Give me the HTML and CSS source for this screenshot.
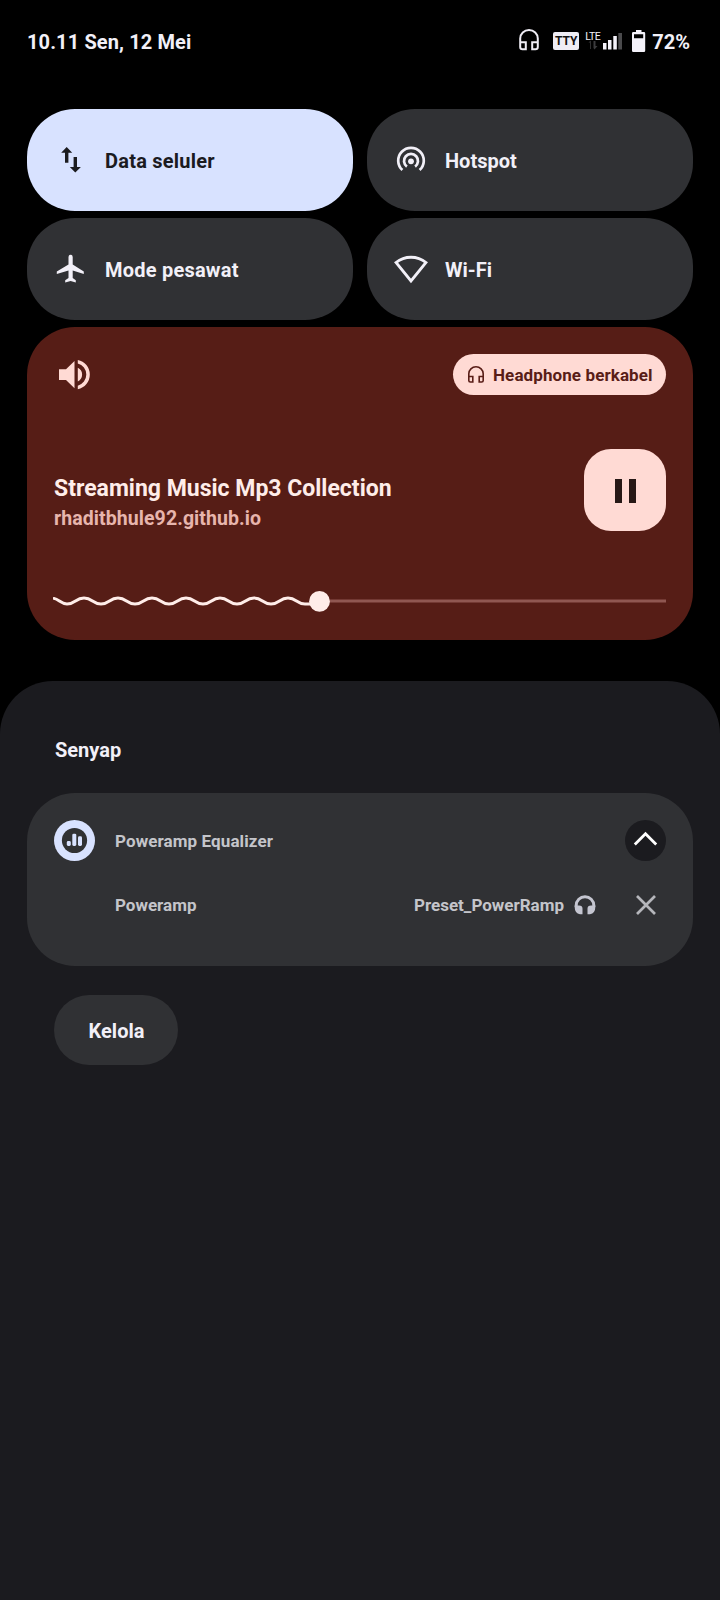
FILE: index.html
```
<!DOCTYPE html>
<html lang="id">
<head>
<meta charset="utf-8">
<title>Panel notifikasi</title>
<link rel="stylesheet" href="styles.css">
</head>
<body>
<div class="screen">
  <header class="status">
    <span class="clock">10.11 Sen, 12 Mei</span>
    <div class="indicators">
      <svg class="i-head" width="20" height="22" viewBox="0 0 20 22" fill="none" stroke="#efedf5" stroke-width="2"><path d="M1.2 18V9.5a8.8 8.5 0 0 1 17.6 0V18q0 2.3-2.3 2.3h-3.3v-7h5.600M1.2 13.300h5.600v7H3.500Q1.200 20.300 1.200 18"/></svg>
      <span class="tty">TTY</span>
      <svg class="i-signal" width="38" height="23" viewBox="0 -3 38 23"><text class="lte" x="0.200" y="9" textLength="15.500">LTE</text><path fill="#3b3b3d" d="M5 18V11.500H3.500L5.800 9.500V18zM8.500 10h2v5h2l-3 3.500-1-1.500z"/><path fill="#f4f2fa" d="M18 12h3.500v6.500H18zM23 9h3.500v9.500H23zM28.300 5h3.500v13.500h-3.500z"/><path fill="#4a4a4c" d="M33.300 2H37v16.500h-3.700z"/></svg>
      <svg class="i-batt" width="14" height="22" viewBox="0 0 14 22"><path fill="#f4f2fa" fill-rule="evenodd" d="M4 0h5.500v2H12q1.200 0 1.200 1.200v17.600q0 1.200-1.200 1.200H1.200Q0 22 0 20.800V3.200Q0 2 1.200 2H4zM2 4.300v4h9.200v-4z"/></svg>
      <span class="pct">72%</span>
    </div>
  </header>

  <section class="tiles">
    <div class="tile on wide">
      <svg width="34" height="34" viewBox="0 0 34 34"><path fill="#1b1b1f" d="M12.700 4l5.500 5.700h-3.800v10h-3.400v-10H7.200zM19.600 14H23v10h3.900l-5.600 5.500-5.500-5.500h3.800z"/></svg>
      <span>Data seluler</span>
    </div>
    <div class="tile">
      <svg width="34" height="34" viewBox="0 0 34 34" fill="none" stroke="#f2f0f8" stroke-width="2.700"><circle cx="17" cy="18.300" r="2.900" fill="#f2f0f8" stroke="none"/><path d="M12.900 23.600a7 7 0 1 1 8.200 0M8.400 27.100a12.800 12.800 0 1 1 17.200 0"/></svg>
      <span>Hotspot</span>
    </div>
    <div class="tile wide">
      <svg width="34" height="34" viewBox="0 0 34 34"><path fill="#f2f0f8" transform="translate(-.2 .8)" d="M30 21.300v-2.700L18.900 11.600V4.100a2.100 2.100 0 0 0-4.200 0v7.500L3 18.600v2.700l11.700-3.500v7.500l-3.300 2.200v2.300l5.400-1.500 5.200 1.500v-2.300l-3.100-2.200v-7.500z"/></svg>
      <span>Mode pesawat</span>
    </div>
    <div class="tile">
      <svg width="34" height="34" viewBox="0 0 34 34" fill="none" stroke="#f2f0f8" stroke-width="2.800"><path d="M2 10.500a24 24 0 0 1 30 0L17 29z"/></svg>
      <span>Wi-Fi</span>
    </div>
  </section>

  <section class="media">
    <div class="media-top">
      <svg class="i-vol" width="38" height="38" viewBox="0 0 38 38"><path fill="#ffdad4" transform="translate(0 -1.700)" d="M5 15h7l8.500-8.300v27.300l-8.500-8.300H5zM23.800 13.500q4.300 2 4.300 6.800t-4.300 6.800zM23.800 5.600a15 15 0 0 1 0 29.400v-3.600a11.500 11.500 0 0 0 0-22.200z"/></svg>
      <div class="chip">
        <svg width="16" height="17" viewBox="0 0 16 17" fill="none" stroke="#591d17" stroke-width="1.600"><path d="M.8 14.500V7.700a7.200 6.900 0 0 1 14.400 0v6.800q0 1.500-1.500 1.500h-2.500v-5.500h4M.8 10.500h4V16H2.300Q.8 16 .8 14.500"/></svg>
        <span>Headphone berkabel</span>
      </div>
    </div>
    <div class="media-mid">
      <div>
        <div class="title">Streaming Music Mp3 Collection</div>
        <div class="source">rhaditbhule92.github.io</div>
      </div>
      <div class="pause"><i></i><i></i></div>
    </div>
    <svg class="seek" width="614" height="24" viewBox="0 -.4 614 24"><path d="M267 11.500H613" stroke="#8f5751" stroke-width="3"/><path d="M1 9C6 10 8 14.500 14 14.500c8.500 0 8.500-6 17-6s8.500 6 17 6 8.500-6 17-6 8.500 6 17 6 8.500-6 17-6 8.500 6 17 6 8.500-6 17-6 8.500 6 17 6 8.500-6 17-6 8.500 6 17 6 8.500-6 17-6 8.500 6 17 6 8.500-6 17-6 8.500 6 17 6h5" fill="none" stroke="#ffede9" stroke-width="3" stroke-linecap="round"/><circle cx="266.500" cy="12" r="10.400" fill="#ffede9"/></svg>
  </section>

  <main class="shade">
    <h2>Senyap</h2>
    <section class="card">
      <div class="row head">
        <svg class="app" width="41" height="41" viewBox="0 0 41 41"><circle cx="20.500" cy="20.500" r="20.500" fill="#d8e2ff"/><circle cx="20.500" cy="20.500" r="12.600" fill="#303134"/><g fill="#d8e2ff"><rect x="12.800" y="21" width="4" height="5" rx="1.400"/><rect x="18.300" y="13.700" width="4" height="12.300" rx="1.400"/><rect x="24" y="16.200" width="4" height="9.800" rx="1.400"/></g></svg>
        <span class="t-app">Poweramp Equalizer</span>
        <svg class="end" width="41" height="41" viewBox="0 0 41 41"><circle cx="20.500" cy="20.500" r="20.500" fill="#1b1b1f"/><path d="M9.800 24.500L20.500 13.800l10.700 10.700" fill="none" stroke="#fff" stroke-width="2.800"/></svg>
      </div>
      <div class="row">
        <span class="t-name">Poweramp</span>
        <span class="t-preset">Preset_PowerRamp</span>
        <svg class="i-phones" width="22" height="20" viewBox="0 0 22 20"><path d="M2.200 12v-1.500a8.800 8.800 0 0 1 17.600 0V12" fill="none" stroke="#c4c5d0" stroke-width="3"/><path fill="#c4c5d0" d="M.7 10.500H5q3.500 0 3.500 3v5.800H6q-5.300-1-5.300-7zM21.300 10.500H17q-3.500 0-3.500 3v5.800H16q5.300-1 5.300-7z"/></svg>
        <svg class="i-close" width="20" height="20" viewBox="0 0 20 20"><path d="M1 1l18 18M19 1L1 19" stroke="#b5b6bb" stroke-width="2.700"/></svg>
      </div>
    </section>
    <div class="manage"><span>Kelola</span></div>
  </main>
</div>
</body>
</html>
```
FILE: styles.css
```
* { box-sizing: border-box; }
body { margin: 0; background: #000; font-family: Roboto, sans-serif; font-weight: 700; color: #f2f0f8; }
svg { display: block; flex: none; }
span { white-space: nowrap; }
.screen { width: 720px; height: 1600px; display: flex; flex-direction: column; overflow: hidden; }
.status { height: 109px; flex: none; padding: 28px 30px 0 27px; display: flex; justify-content: space-between; align-items: flex-start; font-size: 20px; line-height: 28px; }
.clock { letter-spacing: .12px; }
.indicators { display: flex; align-items: flex-start; }
.i-head { margin: 1px 14px 0 0; }
.tty { width: 26px; height: 18px; margin: 4px 6px 0 0; border-radius: 2px; background: #efedf5; color: #111; font-size: 12px; line-height: 18px; text-align: center; }
.i-signal { margin: 0 9px 0 0; }
.lte { font-size: 10.500px; font-weight: 400; fill: #f4f2fa; }
.i-batt { margin: 2px 6px 0 0; }
.tiles { flex: none; padding: 0 27px; display: grid; grid-template-columns: 326px 326px; column-gap: 14px; row-gap: 7px; }
.tile { height: 102px; border-radius: 48px; background: #303134; padding: 0 0 0 27px; display: flex; align-items: center; gap: 17px; font-size: 20px; line-height: 28px; }
.tile span { padding-top: 2px; }
.wide { letter-spacing: .22px; }
.on { background: #d8e2ff; color: #1b1b1f; }
.media { flex: none; height: 313px; margin: 7px 27px 0; padding: 27px 27px 0; border-radius: 48px; background: #561d16; }
.media-top { height: 41px; display: flex; justify-content: space-between; align-items: center; }
.chip { width: 213px; height: 41px; border-radius: 20.500px; background: #ffdad4; color: #591d17; display: flex; align-items: center; gap: 9px; padding-left: 15px; font-size: 17px; letter-spacing: .1px; }
.chip svg { margin-top: -1px; }
.media-mid { height: 82px; margin-top: 54px; display: flex; justify-content: space-between; }
.title { margin-top: 25px; font-size: 23px; line-height: 30px; color: #ffede9; white-space: nowrap; }
.source { font-size: 19.500px; line-height: 29px; letter-spacing: .08px; color: #e7b5ad; }
.pause { width: 82px; height: 82px; border-radius: 27px; background: #ffdad4; display: flex; align-items: center; justify-content: center; gap: 7px; }
.pause i { width: 7px; height: 24px; margin-top: 1px; background: #271816; }
.seek { margin: 58px 0 0 -1px; }
.shade { flex: 1; margin-top: 41px; border-radius: 53px 53px 0 0; background: #1b1b1f; padding: 55px 27px 0; }
h2 { margin: 0 0 29px 28px; font-size: 20px; line-height: 28px; }
.card { height: 173px; border-radius: 48px; background: #303134; color: #c4c5ca; padding: 27px 27px 0; font-size: 17px; }
.row { display: flex; align-items: center; height: 41px; }
.head { margin-bottom: 23px; }
.app { margin-right: 20px; }
.t-app { letter-spacing: .1px; }
.end { margin-left: auto; }
.t-name { margin-left: 61px; }
.t-preset { margin-left: auto; }
.i-phones { margin-left: 10px; }
.i-close { margin: 0 10px 0 40px; }
.manage { width: 124px; height: 70px; margin: 29px 0 0 27px; padding-left: 1px; border-radius: 35px; background: #303134; font-size: 20px; line-height: 72px; text-align: center; }
```
